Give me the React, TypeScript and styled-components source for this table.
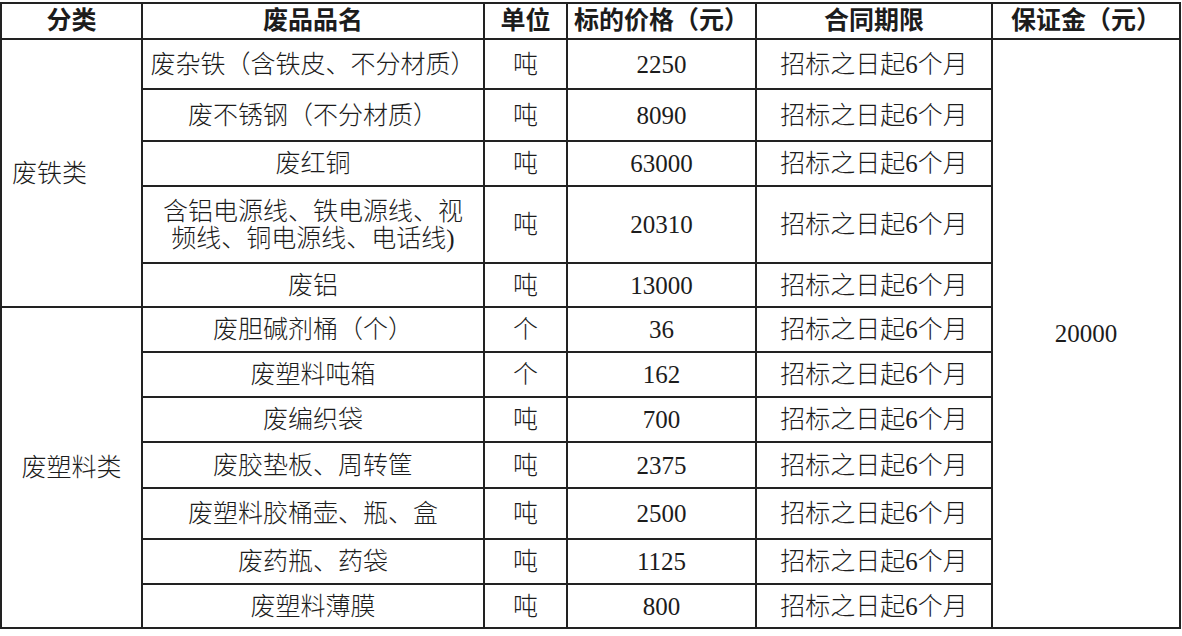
import { FC } from 'react'
import styled, { createGlobalStyle } from 'styled-components'

const GlobalStyle = createGlobalStyle`
  html, body {
    margin: 0;
    padding: 0;
    background: #ffffff;
  }
  body {
    font-family: "Liberation Serif", "Noto Sans CJK SC", serif;
    color: #1c1c1c;
  }
`

interface Item {
  name: string[]
  unit: string
  price: string
  height: number
}

interface Group {
  title: string
  align: 'left' | 'center'
  items: Item[]
}

const PERIOD = '招标之日起6个月'
const DEPOSIT = '20000'
const COLS = [141, 342, 83, 189, 236, 188]

const groups: Group[] = [
  {
    title: '废铁类',
    align: 'left',
    items: [
      { name: ['废杂铁（含铁皮、不分材质）'], unit: '吨', price: '2250', height: 50 },
      { name: ['废不锈钢（不分材质）'], unit: '吨', price: '8090', height: 52 },
      { name: ['废红铜'], unit: '吨', price: '63000', height: 45 },
      {
        name: ['含铝电源线、铁电源线、视', '频线、铜电源线、电话线)'],
        unit: '吨',
        price: '20310',
        height: 77,
      },
      { name: ['废铝'], unit: '吨', price: '13000', height: 44 },
    ],
  },
  {
    title: '废塑料类',
    align: 'center',
    items: [
      { name: ['废胆碱剂桶（个）'], unit: '个', price: '36', height: 45 },
      { name: ['废塑料吨箱'], unit: '个', price: '162', height: 45 },
      { name: ['废编织袋'], unit: '吨', price: '700', height: 45 },
      { name: ['废胶垫板、周转筐'], unit: '吨', price: '2375', height: 46 },
      { name: ['废塑料胶桶壶、瓶、盒'], unit: '吨', price: '2500', height: 51 },
      { name: ['废药瓶、药袋'], unit: '吨', price: '1125', height: 45 },
      { name: ['废塑料薄膜'], unit: '吨', price: '800', height: 44 },
    ],
  },
]

const Sheet = styled.table`
  border-collapse: collapse;
  table-layout: fixed;
  width: 1180px;
  margin: 2px 0 0 0;
`

const Row = styled.tr<{ $h: number }>`
  height: ${(p) => p.$h}px;
`

const Head = styled.th`
  border: 2px solid #222222;
  padding: 0;
  font-size: 25px;
  font-weight: 700;
  line-height: 28px;
  text-align: center;
  vertical-align: middle;
  white-space: nowrap;
`

const Cell = styled.td<{ $align?: 'left' | 'center' }>`
  border: 2px solid #222222;
  padding: 0 ${(p) => (p.$align === 'left' ? '10px' : '0')};
  font-size: 25px;
  font-weight: 300;
  line-height: 27px;
  text-align: ${(p) => p.$align || 'center'};
  vertical-align: middle;
  white-space: nowrap;
`

const NameLine = styled.span`
  display: block;
`

const totalRows = groups.reduce((n, g) => n + g.items.length, 0)

const App: FC = () => {
  return (
    <>
      <GlobalStyle />
      <Sheet>
        <colgroup>
          {COLS.map((w, i) => (
            <col key={i} style={{ width: w }} />
          ))}
        </colgroup>
        <thead>
          <Row $h={36}>
            <Head>分类</Head>
            <Head>废品品名</Head>
            <Head>单位</Head>
            <Head>标的价格（元）</Head>
            <Head>合同期限</Head>
            <Head>保证金（元）</Head>
          </Row>
        </thead>
        <tbody>
          {groups.map((group, gi) =>
            group.items.map((item, ii) => (
              <Row $h={item.height} key={`${gi}-${ii}`}>
                {ii === 0 && (
                  <Cell rowSpan={group.items.length} $align={group.align}>
                    {group.title}
                  </Cell>
                )}
                <Cell>
                  {item.name.map((line) => (
                    <NameLine key={line}>{line}</NameLine>
                  ))}
                </Cell>
                <Cell>{item.unit}</Cell>
                <Cell>{item.price}</Cell>
                <Cell>{PERIOD}</Cell>
                {gi === 0 && ii === 0 && <Cell rowSpan={totalRows}>{DEPOSIT}</Cell>}
              </Row>
            )),
          )}
        </tbody>
      </Sheet>
    </>
  )
}

export default App
